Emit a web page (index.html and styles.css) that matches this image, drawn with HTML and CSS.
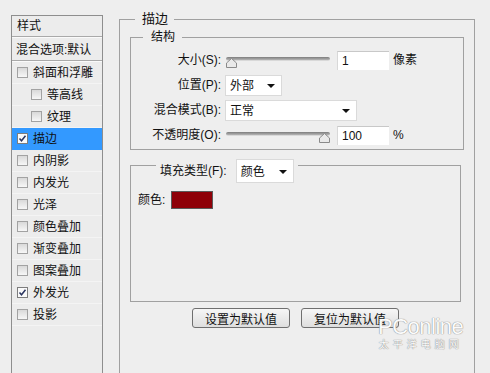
FILE: index.html
```html
<!DOCTYPE html>
<html lang="zh-CN">
<head>
    <meta charset="UTF-8">
    <title>图层样式 - 描边</title>
    <link rel="stylesheet" href="styles.css">
</head>
<body>
    <div class="dialog">
        <div class="style-list">
            <div class="list-title">样式</div>
            <div class="list-blend">混合选项:默认</div>
            <ul class="fx-list">
                <li class="fx"><span class="check"></span>斜面和浮雕</li>
                <li class="fx sub"><span class="check"></span>等高线</li>
                <li class="fx sub"><span class="check"></span>纹理</li>
                <li class="fx active"><span class="check on"><svg width="9" height="9" viewBox="0 0 9 9"><path d="M1.5 4.5 L3.5 6.8 L7.5 1.8" fill="none" stroke="#2a3560" stroke-width="1.5"/></svg></span>描边</li>
                <li class="fx"><span class="check"></span>内阴影</li>
                <li class="fx"><span class="check"></span>内发光</li>
                <li class="fx"><span class="check"></span>光泽</li>
                <li class="fx"><span class="check"></span>颜色叠加</li>
                <li class="fx"><span class="check"></span>渐变叠加</li>
                <li class="fx"><span class="check"></span>图案叠加</li>
                <li class="fx"><span class="check on"><svg width="9" height="9" viewBox="0 0 9 9"><path d="M1.5 4.5 L3.5 6.8 L7.5 1.8" fill="none" stroke="#2a3560" stroke-width="1.5"/></svg></span>外发光</li>
                <li class="fx"><span class="check"></span>投影</li>
            </ul>
        </div>

        <fieldset class="group outer">
            <legend>描边</legend>

            <fieldset class="group struct">
                <legend>结构</legend>
                <div class="row">
                    <label class="lbl">大小(S):</label>
                    <div class="slider">
                        <div class="track"></div>
                        <svg class="thumb" style="left: 0px" width="11" height="10" viewBox="0 0 11 10"><path d="M5.5 0.5 L10.5 5 L10.5 9.5 L0.5 9.5 L0.5 5 Z" fill="#e9e9e9" stroke="#8a8a8a"/></svg>
                    </div>
                    <div class="num">1</div>
                    <span class="unit">像素</span>
                </div>
                <div class="row">
                    <label class="lbl">位置(P):</label>
                    <div class="select sel-pos">外部<i class="arrow"></i></div>
                </div>
                <div class="row">
                    <label class="lbl">混合模式(B):</label>
                    <div class="select sel-blend">正常<i class="arrow"></i></div>
                </div>
                <div class="row">
                    <label class="lbl">不透明度(O):</label>
                    <div class="slider">
                        <div class="track"></div>
                        <svg class="thumb" style="left: 93px" width="11" height="10" viewBox="0 0 11 10"><path d="M5.5 0.5 L10.5 5 L10.5 9.5 L0.5 9.5 L0.5 5 Z" fill="#e9e9e9" stroke="#8a8a8a"/></svg>
                    </div>
                    <div class="num">100</div>
                    <span class="unit">%</span>
                </div>
            </fieldset>

            <div class="fill-box">
                <div class="fill-head">
                    <span>填充类型(F):</span>
                    <div class="select sel-fill">颜色<i class="arrow"></i></div>
                </div>
                <div class="color-row">
                    <span>颜色:</span>
                    <span class="swatch"></span>
                </div>
            </div>

            <div class="buttons">
                <button class="btn">设置为默认值</button>
                <button class="btn">复位为默认值</button>
            </div>
        </fieldset>
    </div>

    <!-- watermark -->
    <div class="watermark">
        <div class="wm-logo">PConline</div>
        <div class="wm-sub">太平洋电脑网</div>
    </div>
</body>
</html>
```

FILE: styles.css
```css
* {
    box-sizing: border-box;
    margin: 0;
    padding: 0;
}
body {
    background-color: #eeeeee;
    color: #111;
    font-family: "Liberation Sans", "Noto Sans CJK SC", sans-serif;
    font-size: 12px;
    line-height: 16px;
    width: 490px;
    height: 373px;
    overflow: hidden;
    position: relative;
}
.dialog {
    display: flex;
    align-items: flex-start;
}
/* left list, runs off the bottom of the window */
.style-list {
    width: 92px;
    height: 358px;
    margin: 15px 0 0 11px;
    border: 1px solid #8e8e8e;
    border-bottom: none;
    background-color: #ececec;
}
.list-title {
    height: 21px;
    padding: 2px 0 0 5px;
    border-bottom: 1px solid #a9a9a9;
    box-shadow: 0 1px 0 #fafafa;
}
.list-blend {
    height: 23px;
    padding: 4px 0 0 4px;
    margin-top: 1px;
    border-bottom: 1px solid #a9a9a9;
    box-shadow: 0 1px 0 #fafafa;
}
.fx-list {
    list-style: none;
    margin-top: 1px;
}
.fx {
    height: 22px;
    display: flex;
    align-items: center;
    padding-left: 5px;
    border-bottom: 1px solid #f4f4f4;
}
.fx.sub {
    padding-left: 19px;
}
.fx.active {
    background-color: #3399ff;
    border-bottom-color: #3399ff;
}
.check {
    width: 11px;
    height: 11px;
    margin-right: 5px;
    border: 1px solid #a2a2a2;
    background: linear-gradient(#d9d9d9, #f7f7f7);
    display: flex;
    align-items: center;
    justify-content: center;
}
.check.on {
    background: #fafafa;
    border-color: #7d7d7d;
}
/* groups */
.group {
    border: 1px solid #a0a0a0;
    min-width: 0;
}
.group legend {
    background-color: #eeeeee;
    line-height: 16px;
}
.outer {
    width: 356px;
    height: 362px;
    margin: 11px 0 0 16px;
    padding: 2px 10px 0;
    border-bottom: none;
}
.outer > legend {
    font-size: 13px;
    margin-left: 5px;
    padding: 0 6px 0 7px;
}
.struct {
    padding: 4px 0 3px;
}
.struct > legend {
    margin-left: 12px;
    padding: 0 7px 0 8px;
}
.row {
    display: flex;
    align-items: center;
    height: 22px;
    margin-bottom: 3px;
}
.row:last-child {
    margin-bottom: 0;
}
.lbl {
    width: 90px;
    text-align: right;
    margin-right: 4px;
}
.slider {
    position: relative;
    width: 104px;
    height: 14px;
    align-self: flex-start;
    margin: 8px 7px 0 1px;
}
.track {
    height: 4px;
    border-radius: 2px;
    background: linear-gradient(#7c7c7c, #b5b5b5);
    border-bottom: 1px solid #d8d8d8;
}
.thumb {
    position: absolute;
    top: 1px;
}
.num {
    width: 52px;
    height: 19px;
    padding: 1px 0 0 4px;
    background-color: #fff;
    border-top: 1px solid #c8c8c8;
    border-left: 1px solid #d8d8d8;
}
.unit {
    margin-left: 4px;
}
.select {
    position: relative;
    height: 21px;
    padding: 2px 0 0 4px;
    background-color: #fff;
    border: 1px solid #dadada;
}
.arrow {
    position: absolute;
    right: 6px;
    top: 8px;
    width: 0;
    height: 0;
    border-left: 4px solid transparent;
    border-right: 4px solid transparent;
    border-top: 4px solid #111;
}
.sel-pos {
    width: 57px;
}
.sel-blend {
    width: 132px;
}
/* fill */
.fill-box {
    height: 137px;
    margin: 15px 3px 0 0;
    padding-left: 7px;
    border: 1px solid #a0a0a0;
}
.fill-head {
    display: flex;
    align-items: center;
    width: fit-content;
    height: 24px;
    margin: -7px 0 0 18px;
    padding: 0 4px;
    background-color: #eeeeee;
}
.sel-fill {
    width: 58px;
    height: 24px;
    padding-top: 4px;
    margin-left: 9px;
}
.sel-fill .arrow {
    top: 10px;
}
.color-row {
    display: flex;
    align-items: center;
    margin-top: 8px;
}
.swatch {
    width: 42px;
    height: 18px;
    margin-left: 6px;
    background-color: #8e0008;
    border: 1px solid #5a5a5a;
}
.buttons {
    display: flex;
    justify-content: center;
    gap: 11px;
    margin: 6px 3px 0 0;
}
.btn {
    width: 98px;
    height: 20px;
    font-family: "Liberation Sans", "Noto Sans CJK SC", sans-serif;
    font-size: 12px;
    color: #111;
    border: 1px solid #6f6f6f;
    border-radius: 3px;
    background: linear-gradient(#f6f6f6, #dedede);
}
/* watermark */
.watermark {
    position: absolute;
    left: 378px;
    top: 315px;
    text-align: center;
    color: #fbfbfb;
    text-shadow: 0 0 1px #8c8c8c, 0 0 1px #8c8c8c;
}
.wm-logo {
    font-size: 22px;
    line-height: 24px;
    letter-spacing: -0.5px;
}
.wm-sub {
    font-size: 10px;
    line-height: 12px;
    letter-spacing: 4px;
}
```
